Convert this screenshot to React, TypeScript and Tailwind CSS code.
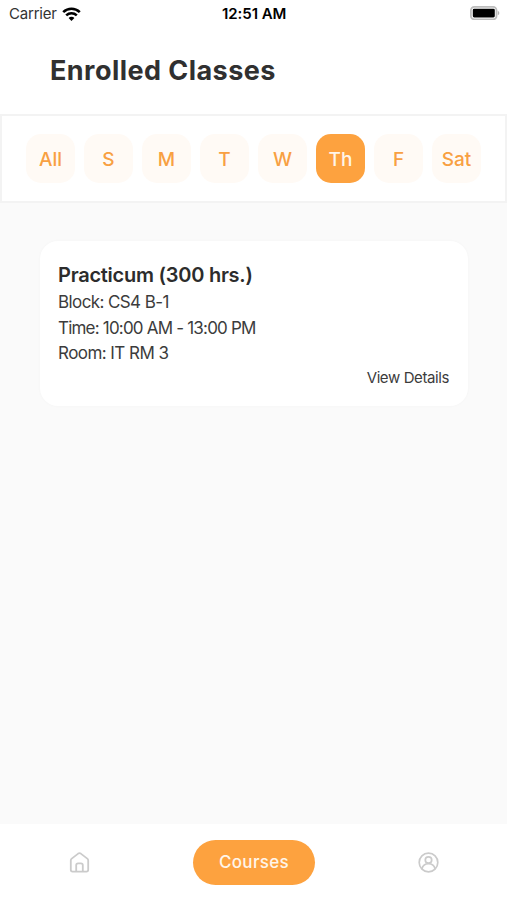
import { useState } from "react";

interface Course {
  id: number;
  name: string;
  block: string;
  time: string;
  room: string;
}

const days: string[] = ["All", "S", "M", "T", "W", "Th", "F", "Sat"];

const courses: Course[] = [
  { id: 1, name: "Practicum (300 hrs.)", block: "CS4 B-1", time: "10:00 AM - 13:00 PM", room: "IT RM 3" },
];

const StatusBar = () => (
  <div className="relative flex h-7 items-center justify-between pl-[9px] pr-[7px] text-black">
    <div className="flex items-center gap-[5px]">
      <span className="text-[15px] leading-7 tracking-[-0.2px] text-[#333]">Carrier</span>
      <svg width="19" height="15" viewBox="0 0 19 15" fill="none" stroke="currentColor" strokeWidth="2.6">
        <path d="M1.2 5.1C6 .6 13 .6 17.8 5.1" />
        <path d="M4.2 8.4C7.2 5.6 11.8 5.6 14.8 8.4" />
        <path d="M9.5 13.9 6.6 10.9C8.2 9.4 10.8 9.4 12.4 10.9Z" fill="currentColor" stroke="none" />
      </svg>
    </div>
    <span className="absolute left-[222px] text-[15px] font-semibold leading-7 tracking-[-0.05px]">12:51 AM</span>
    <svg width="30" height="14" viewBox="0 0 30 14" className="-mt-0.5">
      <rect x=".9" y=".9" width="25.6" height="12.4" rx="3.4" fill="#fff" stroke="#bdbdbd" strokeWidth="1.8" />
      <rect x="2.8" y="2.7" width="22" height="8.8" rx="1.4" fill="#000" />
      <path d="M27.8 4.9C29.8 5.5 29.8 8.5 27.8 9.1Z" fill="#b5b5b5" />
    </svg>
  </div>
);

const CourseCard = ({ course }: { course: Course }) => (
  <div className="flex h-[165px] flex-col rounded-[18px] bg-white pl-[18px] pr-5 pt-5 text-[17px] leading-[25.7px] text-[#3c3c3c] shadow-[0_0_3px_rgba(0,0,0,0.03)]">
    <h2 className="mb-px text-[20px] font-semibold leading-7 tracking-[-0.25px] text-[#2c2c2c]">{course.name}</h2>
    <p className="tracking-[-0.6px]">Block: {course.block}</p>
    <p className="tracking-[-0.8px]">Time: {course.time}</p>
    <p className="tracking-[-0.55px]">Room: {course.room}</p>
    <button className="-mr-px self-end text-[15px] leading-[21px] tracking-[-0.4px]">View Details</button>
  </div>
);

const App = () => {
  const [activeDay, setActiveDay] = useState<string>("Th");

  return (
    <div className="flex h-[900px] w-[507px] flex-col overflow-hidden bg-[#fafafa] font-[Inter,sans-serif]">
      <header className="h-[114px] bg-white">
        <StatusBar />
        <h1 className="pl-[50px] pt-[25px] text-[27px] font-bold leading-9 tracking-[0.45px] text-[#303030]">Enrolled Classes</h1>
      </header>
      <div className="flex h-[89px] gap-[9px] border-2 border-[#f3f3f3] bg-white pl-6 pt-[18px]">
        {days.map((day) => (
          <button
            key={day}
            onClick={() => setActiveDay(day)}
            className={`size-[49px] shrink-0 rounded-[15px] pt-[3px] text-[19px] font-medium ${
              day === activeDay ? "bg-[#fda23f] text-[#fff5e9]" : "bg-[#fffaf5] text-[#f8a042]"
            }`}
          >
            {day}
          </button>
        ))}
      </div>
      <main className="flex-1 pl-10 pr-[39px] pt-[38px]">
        {courses.map((course) => (
          <CourseCard key={course.id} course={course} />
        ))}
      </main>
      <nav className="flex h-[76px] items-start bg-white pl-[69px] pt-4">
        <button className="mt-3 text-[#cbcbcb]">
          <svg width="21" height="21" viewBox="0 0 21 21" fill="none" stroke="currentColor" strokeWidth="1.8" strokeLinejoin="round">
            <path d="M1.8 8.4Q1.8 7.3 2.7 6.6L9.2 1.6Q10.5.7 11.8 1.6L18.3 6.6Q19.2 7.3 19.2 8.4V17.8Q19.2 19.6 17.4 19.6H3.6Q1.8 19.6 1.8 17.8Z" />
            <path d="M7.2 19.5V13.2Q7.2 11.3 9.1 11.3H11.9Q13.8 11.3 13.8 13.2V19.5" />
          </svg>
        </button>
        <button className="ml-[103px] h-[45px] w-[122px] rounded-full bg-[#fda23f] text-[17px] font-medium tracking-[0.3px] text-[#fff5e9]">
          Courses
        </button>
        <button className="ml-[102.5px] mt-3 text-[#cbcbcb]">
          <svg width="21" height="21" viewBox="0 0 21 21" fill="none" stroke="currentColor" strokeWidth="1.7">
            <circle cx="10.5" cy="10.5" r="9.3" />
            <circle cx="10.5" cy="8" r="3.2" />
            <path d="M4 17C5.2 10 15.8 10 17 17" />
          </svg>
        </button>
      </nav>
    </div>
  );
};

export default App;
